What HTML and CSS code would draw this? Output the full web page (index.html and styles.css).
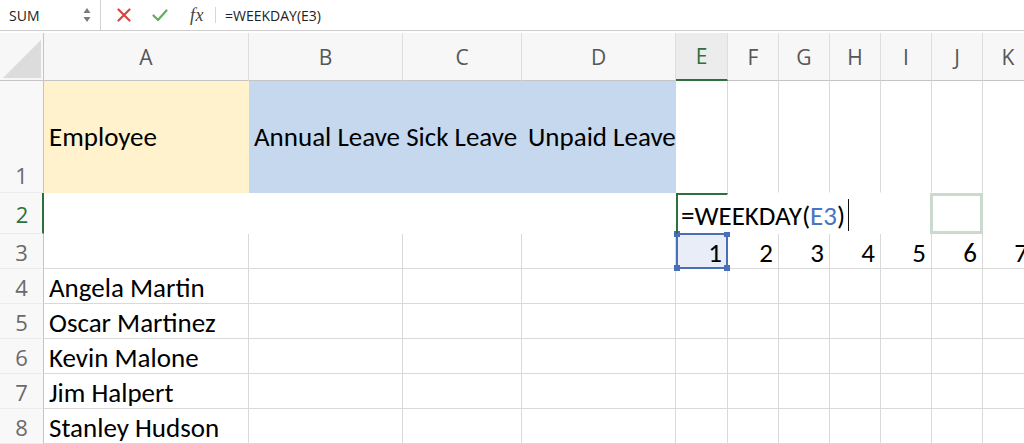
FILE: index.html
```html
<!DOCTYPE html>
<html>
<head>
<meta charset="utf-8">
<link rel="stylesheet" href="styles.css">
</head>
<body>
<div class="formula-bar">
  <div class="name-box">
    <span class="name">SUM</span>
    <svg class="spin" width="8" height="18" viewBox="0 0 8 18"><path d="M4 2 L7.5 7 L0.5 7 Z" fill="#7a7a7a"/><path d="M4 16 L7.5 11 L0.5 11 Z" fill="#7a7a7a"/></svg>
  </div>
  <div class="fb-tools">
    <svg class="ic-x" width="14" height="14" viewBox="0 0 14 14"><path d="M1.5 1.5 L12.5 12.5 M12.5 1.5 L1.5 12.5" stroke="#d4473f" stroke-width="2.2" stroke-linecap="round"/></svg>
    <svg class="ic-ok" width="16" height="13" viewBox="0 0 16 13"><path d="M1.5 6.5 L6 11 L14.5 1.5" stroke="#63ad5e" stroke-width="2.2" fill="none" stroke-linecap="round" stroke-linejoin="round"/></svg>
    <span class="fx">fx</span>
  </div>
  <div class="fb-sep"></div>
  <div class="fb-input">=WEEKDAY(E3)</div>
</div>

<div class="sheet">
  <!-- header row -->
  <div class="corner"><svg width="43" height="47" viewBox="0 0 43 47"><path d="M3 45 L41 7 L41 45 Z" fill="#dcdcdc"/></svg></div>
  <div class="ch">A</div>
  <div class="ch">B</div>
  <div class="ch">C</div>
  <div class="ch">D</div>
  <div class="ch active">E</div>
  <div class="ch">F</div>
  <div class="ch">G</div>
  <div class="ch">H</div>
  <div class="ch">I</div>
  <div class="ch">J</div>
  <div class="ch">K</div>

  <!-- row 1 -->
  <div class="rh r1">1</div>
  <div class="c mid fill-yellow">Employee</div>
  <div class="c mid fill-blue over">Annual Leave Sick Leave</div>
  <div class="c mid fill-blue"></div>
  <div class="c mid fill-blue shift2">Unpaid Leave</div>
  <div class="c nb"></div>
  <div class="c nb"></div>
  <div class="c nb"></div>
  <div class="c nb"></div>
  <div class="c nb"></div>
  <div class="c nb"></div>
  <div class="c nb"></div>

  <!-- row 2 -->
  <div class="rh rh-active">2</div>
  <div class="c blank"></div>
  <div class="c blank"></div>
  <div class="c blank"></div>
  <div class="c blank"></div>
  <div class="c blank edit"><span class="edit-text">=WEEKDAY(<span class="ref">E3</span>)<span class="caret"></span></span></div>
  <div class="c blank"></div>
  <div class="c blank"></div>
  <div class="c blank"></div>
  <div class="c blank"></div>
  <div class="c blank ghost"></div>
  <div class="c blank"></div>

  <!-- row 3 -->
  <div class="rh">3</div>
  <div class="c"></div>
  <div class="c"></div>
  <div class="c"></div>
  <div class="c"></div>
  <div class="c num sel">1<i class="h tl"></i><i class="h tr"></i><i class="h bl"></i><i class="h br"></i></div>
  <div class="c num">2</div>
  <div class="c num">3</div>
  <div class="c num">4</div>
  <div class="c num">5</div>
  <div class="c num">6</div>
  <div class="c num">7</div>

  <!-- row 4 -->
  <div class="rh">4</div>
  <div class="c">Angela Martin</div>
  <div class="c"></div><div class="c"></div><div class="c"></div><div class="c"></div><div class="c"></div><div class="c"></div><div class="c"></div><div class="c"></div><div class="c"></div><div class="c"></div>

  <!-- row 5 -->
  <div class="rh">5</div>
  <div class="c">Oscar Martinez</div>
  <div class="c"></div><div class="c"></div><div class="c"></div><div class="c"></div><div class="c"></div><div class="c"></div><div class="c"></div><div class="c"></div><div class="c"></div><div class="c"></div>

  <!-- row 6 -->
  <div class="rh">6</div>
  <div class="c">Kevin Malone</div>
  <div class="c"></div><div class="c"></div><div class="c"></div><div class="c"></div><div class="c"></div><div class="c"></div><div class="c"></div><div class="c"></div><div class="c"></div><div class="c"></div>

  <!-- row 7 -->
  <div class="rh">7</div>
  <div class="c">Jim Halpert</div>
  <div class="c"></div><div class="c"></div><div class="c"></div><div class="c"></div><div class="c"></div><div class="c"></div><div class="c"></div><div class="c"></div><div class="c"></div><div class="c"></div>

  <!-- row 8 -->
  <div class="rh">8</div>
  <div class="c">Stanley Hudson</div>
  <div class="c"></div><div class="c"></div><div class="c"></div><div class="c"></div><div class="c"></div><div class="c"></div><div class="c"></div><div class="c"></div><div class="c"></div><div class="c"></div>
</div>
</body>
</html>
```

FILE: styles.css
```css
* { box-sizing: border-box; margin: 0; padding: 0; }

body {
  width: 1024px;
  height: 444px;
  overflow: hidden;
  background: #ffffff;
  font-family: Carlito, Lato, "Open Sans", sans-serif;
  color: #000;
}

/* ---------- formula bar ---------- */
.formula-bar {
  height: 31px;
  display: flex;
  align-items: center;
  border-bottom: 1px solid #cdcdcd;
  margin-bottom: 2px;
  font-family: "Open Sans", "Noto Sans", sans-serif;
}

.name-box {
  width: 101px;
  height: 100%;
  display: flex;
  align-items: center;
  justify-content: space-between;
  padding: 0 9px 0 9px;
  border-right: 1px solid #d2d2d2;
}

.name {
  font-size: 14px;
  color: #222;
}

.fb-tools {
  display: flex;
  align-items: center;
  padding-left: 16px;
  height: 100%;
}

.ic-x { margin-right: 21px; }
.ic-ok { margin-right: 22px; }

.fx {
  font-family: "Liberation Serif", "DejaVu Serif", serif;
  font-style: italic;
  font-size: 18px;
  color: #444;
  letter-spacing: 0.5px;
}

.fb-sep {
  width: 1px;
  height: 16px;
  background: #d6d6d6;
  margin-left: 11px;
}

.fb-input {
  padding-left: 9px;
  font-size: 14px;
  color: #222;
}

/* ---------- sheet grid ---------- */
.sheet {
  display: grid;
  grid-template-columns: 44px 205px 154px 119px 154px 52px repeat(6, 51px);
  grid-template-rows: 48px 112px 41px repeat(6, 35px);
  width: 1024px;
  overflow: hidden;
}

.corner {
  background: #f7f7f7;
  border-right: 1px solid #c4c4c4;
  border-bottom: 1px solid #c4c4c4;
}
.corner svg { display: block; }

.ch {
  background: #f7f7f7;
  border-right: 1px solid #dedede;
  border-bottom: 1px solid #c4c4c4;
  display: flex;
  align-items: center;
  justify-content: center;
  font-family: "Open Sans", "Noto Sans", sans-serif;
  font-size: 21px;
  color: #565656;
}

.ch.active {
  background: #ececec;
  color: #2f7040;
  border-bottom: 2px solid #2f6f3e;
}

.rh {
  background: #f8f8f8;
  border-right: 1px solid #c4c4c4;
  border-bottom: 1px solid #ececec;
  display: flex;
  align-items: center;
  justify-content: center;
  font-family: "Open Sans", "Noto Sans", sans-serif;
  font-size: 22px;
  color: #6a6a6a;
  padding-top: 1px;
}

.rh.r1 {
  align-items: flex-end;
  padding-bottom: 2px;
}

.rh.rh-active {
  color: #2f7040;
  border-right: 2px solid #2f6f3e;
  padding-left: 2px;
}

.c {
  border-right: 1px solid #d9d9d9;
  border-bottom: 1px solid #d9d9d9;
  display: flex;
  align-items: center;
  padding: 2px 5px 0 5px;
  font-size: 27px;
  white-space: nowrap;
  overflow: visible;
  position: relative;
}

.c.mid { padding-top: 0; }

.fill-yellow {
  background: #fff2cc;
  border-color: #fff2cc;
}

.fill-blue {
  background: #c5d8ee;
  border-color: #c5d8ee;
}

.over { z-index: 1; }
.shift2 { padding-left: 6px; }

.nb { border-bottom-color: transparent; }

.blank {
  border-right-color: transparent;
  border-bottom-color: transparent;
}

.edit {
  border-top: 2px solid #2f6f3e;
  border-left: 2px solid #2f6f3e;
  padding-left: 3px;
  padding-top: 2px;
  z-index: 3;
}

.edit-text {
  display: inline-flex;
  align-items: center;
  background: #fff;
}

.ref { color: #4a74c0; }

.caret {
  display: inline-block;
  width: 1px;
  height: 32px;
  background: #111;
  margin-left: 3px;
}

.ghost {
  border: 3px solid #ccd9cd;
  margin-left: -2px;
}

.num {
  justify-content: flex-end;
  padding-right: 5px;
}

.sel {
  background: #e8edf7;
  border: 2px solid #4a6fb6;
  margin-top: -1px;
  padding-right: 4px;
  z-index: 2;
}

.h {
  position: absolute;
  width: 6px;
  height: 6px;
  background: #4a6fb6;
}
.h.tl { left: -4px; top: -4px; }
.h.tr { right: -4px; top: -4px; }
.h.bl { left: -4px; bottom: -4px; }
.h.br { right: -4px; bottom: -4px; }
```
